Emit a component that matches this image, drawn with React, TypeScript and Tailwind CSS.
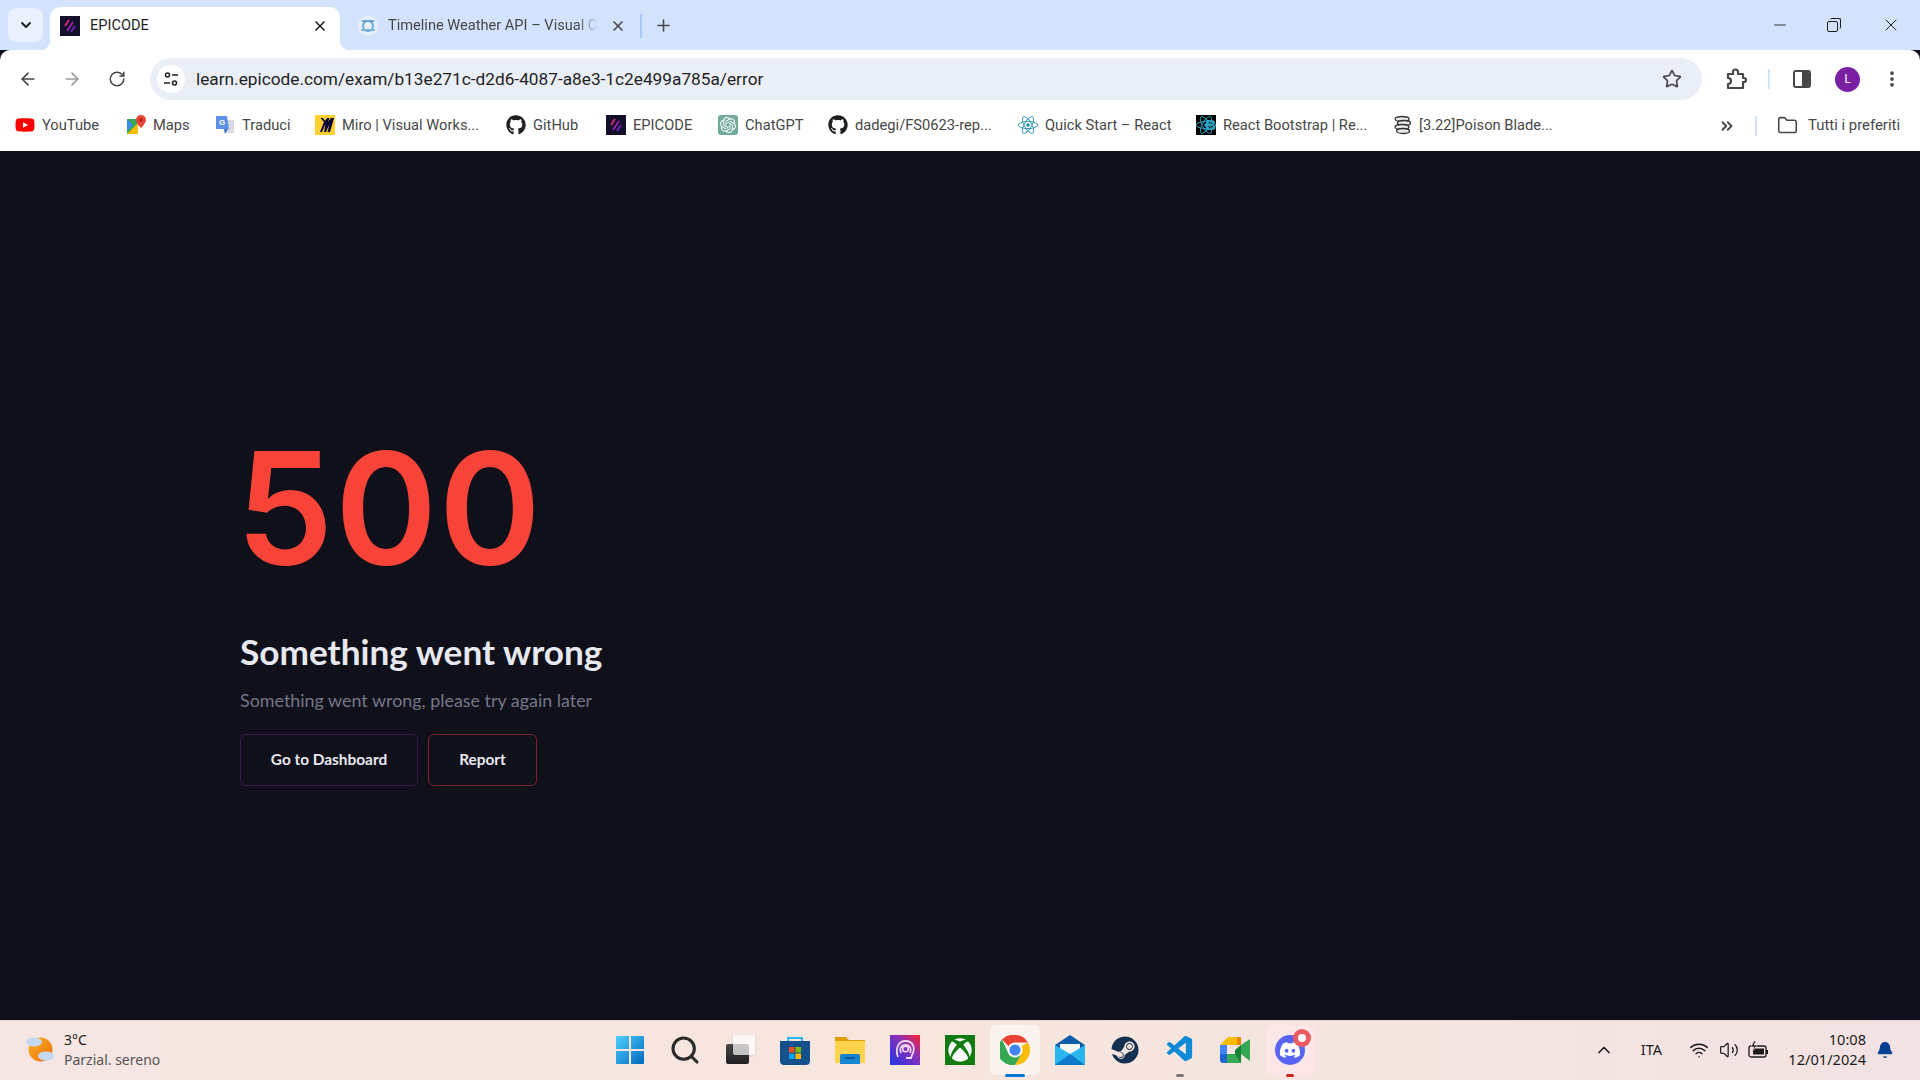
import type { ReactNode } from 'react'
import {
  ArrowLeft,
  ArrowRight,
  Bell,
  ChevronDown,
  ChevronsRight,
  ChevronUp,
  Folder,
  Minus,
  MoreVertical,
  Plus,
  RotateCw,
  Search,
  Star,
  Volume2,
  Wifi,
  X,
} from 'lucide-react'
import { FaDiscord, FaGithub, FaReact, FaSteam, FaXbox, FaYoutube } from 'react-icons/fa'
import { SiOpenai } from 'react-icons/si'
import { VscVscode } from 'react-icons/vsc'

function EpicodeLogo() {
  return (
    <svg viewBox="0 0 20 20" className="h-5 w-5 shrink-0">
      <rect width="20" height="20" fill="#14102a" />
      <path d="M9 4 5 10" stroke="#d8297f" strokeWidth="1.8" />
      <path d="M13 6 7 15" stroke="#a020b0" strokeWidth="1.8" />
      <path d="M15 10 11 16" stroke="#6a24c0" strokeWidth="1.8" />
    </svg>
  )
}

function WeatherApiIcon() {
  return (
    <svg viewBox="0 0 20 20" className="h-5 w-5 shrink-0">
      <circle cx="10" cy="10" r="10" fill="#e8eef8" />
      <circle cx="10" cy="10" r="5" fill="none" stroke="#5aa4d8" strokeWidth="1.8" />
      <path d="M3 14h14" stroke="#7fb5dd" strokeWidth="2" />
      <path d="M4 5h4M12 5h4" stroke="#4a8fc8" strokeWidth="1.6" />
    </svg>
  )
}

function MapsIcon() {
  return (
    <svg viewBox="0 0 20 20" className="h-5 w-5 shrink-0">
      <path d="M1 4h11v15H1z" fill="#34a853" />
      <path d="M1 19 12 8v11z" fill="#fbbc04" />
      <path d="M1 4l6 6-6 6z" fill="#4285f4" />
      <path d="M15 0a5 5 0 0 1 5 5c0 3-5 8-5 8s-5-5-5-8a5 5 0 0 1 5-5z" fill="#ea4335" />
      <circle cx="15" cy="5" r="1.8" fill="#a52714" />
    </svg>
  )
}

function TranslateIcon() {
  return (
    <svg viewBox="0 0 20 20" className="h-5 w-5 shrink-0">
      <path d="M6 5h13v13H9z" fill="#d6dbe2" />
      <path d="M1 1h11l2 13H1z" fill="#5c8fe8" />
      <text x="4" y="10" fontSize="8" fontWeight="700" fill="#fff" fontFamily="'Liberation Sans', sans-serif">
        G
      </text>
      <path d="M9 14l1 5 3-5z" fill="#4474c8" />
    </svg>
  )
}

function MiroIcon() {
  return (
    <svg viewBox="0 0 20 20" className="h-5 w-5 shrink-0">
      <rect width="20" height="20" fill="#ffd02f" />
      <path d="M12 3h2.6l-1.8 4 3.2-4H19l-4 14h-2.5l2-8-3.500 8H9l1.500-8L7 17H5l4-10-3.500-4H8l2 3z" fill="#050038" />
    </svg>
  )
}

function BootstrapIcon() {
  return (
    <div className="relative flex h-5 w-5 shrink-0 items-center justify-center bg-black">
      <FaReact className="h-5 w-5 text-[#2ba9c9]" />
      <span className="absolute right-0 top-[1px] font-['Liberation_Sans',sans-serif] text-[15px] font-bold leading-[18px] text-[#2ba9c9]">
        B
      </span>
    </div>
  )
}

function CoinsIcon() {
  return (
    <svg viewBox="0 0 20 20" className="h-5 w-5 shrink-0" fill="#e8e8e8" stroke="#333" strokeWidth="1.3">
      <ellipse cx="10" cy="4" rx="7" ry="2.500" />
      <ellipse cx="12" cy="8" rx="6.500" ry="2.500" />
      <ellipse cx="10" cy="12" rx="7" ry="2.500" />
      <ellipse cx="11" cy="16" rx="6.500" ry="2.500" />
    </svg>
  )
}

const bookmarks: { label: string; icon: ReactNode; width: string }[] = [
  { label: 'YouTube', icon: <FaYoutube className="h-5 w-5 shrink-0 text-[#f00]" />, width: 'w-[111px]' },
  { label: 'Maps', icon: <MapsIcon />, width: 'w-[89px]' },
  { label: 'Traduci', icon: <TranslateIcon />, width: 'w-[100px]' },
  { label: 'Miro | Visual Works...', icon: <MiroIcon />, width: 'w-[191px]' },
  { label: 'GitHub', icon: <FaGithub className="h-5 w-5 shrink-0 text-[#1f1f1f]" />, width: 'w-[100px]' },
  { label: 'EPICODE', icon: <EpicodeLogo />, width: 'w-[112px]' },
  {
    label: 'ChatGPT',
    icon: (
      <span className="flex h-5 w-5 shrink-0 items-center justify-center rounded-[3px] bg-[#74aa9c]">
        <SiOpenai className="h-4 w-4 text-white" />
      </span>
    ),
    width: 'w-[110px]',
  },
  { label: 'dadegi/FS0623-rep...', icon: <FaGithub className="h-5 w-5 shrink-0 text-[#1f1f1f]" />, width: 'w-[190px]' },
  { label: 'Quick Start – React', icon: <FaReact className="h-5 w-5 shrink-0 text-[#2a8fb5]" />, width: 'w-[178px]' },
  { label: 'React Bootstrap | Re...', icon: <BootstrapIcon />, width: 'w-[196px]' },
  { label: '[3.22]Poison Blade...', icon: <CoinsIcon />, width: 'w-[180px]' },
]

function WindowsIcon() {
  return (
    <svg viewBox="0 0 30 30" className="h-[30px] w-[30px]">
      <defs>
        <linearGradient id="win" x1="0" y1="0" x2="1" y2="1">
          <stop offset="0" stopColor="#4fd0ff" />
          <stop offset="1" stopColor="#0067c0" />
        </linearGradient>
      </defs>
      <path d="M1 2a1 1 0 0 1 1-1h12v13H1zM16 1h12a1 1 0 0 1 1 1v12H16zM1 16h13v13H2a1 1 0 0 1-1-1zM16 16h13v12a1 1 0 0 1-1 1H16z" fill="url(#win)" />
    </svg>
  )
}

function TaskViewIcon() {
  return (
    <div className="relative h-[30px] w-[30px]">
      <div className="absolute bottom-[1px] left-[1px] h-[20px] w-[23px] rounded-[2px] bg-gradient-to-b from-[#4a4a4a] to-[#202020]" />
      <div className="absolute right-[0px] top-[0px] h-[20px] w-[22px] rounded-[2px] bg-white/70 shadow-sm" />
    </div>
  )
}

function StoreIcon() {
  return (
    <svg viewBox="0 0 30 30" className="h-[30px] w-[30px]">
      <path d="M8 7V3h14v4" fill="none" stroke="#28b8f0" strokeWidth="2" />
      <path d="M0 6h30v20a4 4 0 0 1-4 4H4a4 4 0 0 1-4-4z" fill="#14508c" />
      <rect x="9" y="12" width="5.500" height="5.500" fill="#f25022" />
      <rect x="15.500" y="12" width="5.500" height="5.500" fill="#7fba00" />
      <rect x="9" y="18.500" width="5.500" height="5.500" fill="#00a4ef" />
      <rect x="15.500" y="18.500" width="5.500" height="5.500" fill="#ffb900" />
    </svg>
  )
}

function FolderIcon() {
  return (
    <svg viewBox="0 0 30 30" className="h-[30px] w-[30px]">
      <path d="M0 2h11l3 3h16v4H0z" fill="#e0a100" />
      <path d="M0 6h30v22H0z" fill="#ffd24d" />
      <path d="M5 21a2 2 0 0 1 2-2h16a2 2 0 0 1 2 2v8H5z" fill="#1684d0" />
      <path d="M10 23h10" stroke="#0b4f88" strokeWidth="1.500" />
    </svg>
  )
}

function PodcastIcon() {
  return (
    <svg viewBox="0 0 30 30" className="h-[30px] w-[30px]">
      <defs>
        <linearGradient id="pod" x1="0" y1="1" x2="1" y2="0">
          <stop offset="0" stopColor="#2037e8" />
          <stop offset="0.600" stopColor="#8a2fb8" />
          <stop offset="1" stopColor="#ff2030" />
        </linearGradient>
      </defs>
      <rect width="30" height="30" fill="url(#pod)" />
      <path d="M8 22c-3-8 0-16 7.500-16S26 13 22 20l-1 3h-5" fill="none" stroke="#f0d8f0" strokeWidth="1.800" />
      <path d="M11 18c-2-4 0-8 4.500-8s6.500 4 4.500 8" fill="none" stroke="#f0d8f0" strokeWidth="1.800" />
      <circle cx="15.500" cy="14" r="2.800" fill="none" stroke="#f0d8f0" strokeWidth="1.600" />
    </svg>
  )
}

function ChromeIcon() {
  return (
    <svg viewBox="0 0 30 30" className="h-[30px] w-[30px]">
      <path d="M15 0a15 15 0 0 1 13 7.500H15a7.500 7.500 0 0 0-6.500 3.750L2 4.500A15 15 0 0 1 15 0z" fill="#ea4335" />
      <path d="M28 7.500A15 15 0 0 1 15 30l6.500-11.250A7.500 7.500 0 0 0 21.500 11z" fill="#fbbc04" />
      <path d="M15 30A15 15 0 0 1 2 4.500l6.500 14.250A7.500 7.500 0 0 0 21.500 18.750z" fill="#34a853" />
      <circle cx="15" cy="15" r="6.800" fill="#fff" />
      <circle cx="15" cy="15" r="5.600" fill="#4285f4" />
    </svg>
  )
}

function MailIcon() {
  return (
    <svg viewBox="0 0 30 30" className="h-[30px] w-[30px]">
      <path d="M0 10 15 0l15 10v18H0z" fill="#0f5da8" />
      <path d="M5 9h20v8l-10 5-10-5z" fill="#f4f6f8" />
      <path d="M0 10l15 9 15-9v20H0z" fill="#29b6ee" />
      <path d="M0 30l15-11 15 11z" fill="#0f78c8" />
    </svg>
  )
}

function MeetIcon() {
  return (
    <svg viewBox="0 0 30 30" className="h-[30px] w-[30px]">
      <path d="M8 2h13v8H0z" fill="#fbbc04" />
      <path d="M0 10h7v9H0z" fill="#4285f4" />
      <path d="M0 19h7v9H3a3 3 0 0 1-3-3z" fill="#1967d2" />
      <path d="M7 19h14v9H7z" fill="#34a853" />
      <path d="M21 10v-8l-4 0v8z" fill="#ea8600" />
      <path d="M15 15l6-5v18l-6-9z" fill="#188038" />
      <path d="M21 10l9-6v22l-9-7z" fill="#34a853" />
    </svg>
  )
}

function WeatherIcon() {
  return (
    <svg viewBox="0 0 30 30" className="h-[30px] w-[30px]">
      <defs>
        <linearGradient id="sun" x1="0" y1="0" x2="1" y2="1">
          <stop offset="0" stopColor="#f9b51e" />
          <stop offset="1" stopColor="#ee6a10" />
        </linearGradient>
      </defs>
      <circle cx="15.500" cy="14.500" r="12" fill="url(#sun)" />
      <ellipse cx="9" cy="7" rx="8" ry="4.500" fill="#c3d9f2" />
      <ellipse cx="21" cy="21" rx="8" ry="4.500" fill="#c3d9f2" />
    </svg>
  )
}

function ExtensionsIcon() {
  return (
    <svg viewBox="0 0 24 24" className="ml-[22px] h-[24px] w-[24px]" fill="none" stroke="#474747" strokeWidth="2.200" strokeLinejoin="round">
      <path d="M4 7h5V5a2.500 2.500 0 0 1 5 0v2h5v4h1a2 2 0 0 1 0 4h-1v6H4v-4a2.500 2.500 0 0 0 0-6z" />
    </svg>
  )
}

function BatteryIcon() {
  return (
    <svg viewBox="0 0 22 18" className="ml-[9px] h-[18px] w-[22px]" fill="none" stroke="#1c1c1c" strokeWidth="1.300">
      <rect x="1" y="5" width="17" height="11" rx="2" />
      <rect x="5" y="7.500" width="11" height="6" fill="#1c1c1c" stroke="none" />
      <path d="M19 9v4" strokeWidth="2" />
      <path d="M6 0 3 6h3l-2 5 5-7H6l2-4z" fill="#1c1c1c" stroke="#f3e2e3" strokeWidth="0.600" />
    </svg>
  )
}

function TaskbarSlot({
  children,
  highlight,
  indicator,
}: {
  children: ReactNode
  highlight?: string
  indicator?: string
}) {
  return (
    <div className="relative flex h-[57px] w-[55px] items-center justify-center">
      {highlight && <div className={`absolute inset-x-[2.5px] top-[4px] h-[50px] rounded-[5px] ${highlight}`} />}
      <div className="relative">{children}</div>
      {indicator && <div className={`absolute bottom-[1px] left-1/2 h-[3px] -translate-x-1/2 rounded-full ${indicator}`} />}
    </div>
  )
}

export default function App() {
  return (
    <div className="flex h-[1080px] w-[1920px] flex-col overflow-hidden bg-[#0f101a] font-['Noto_Sans',sans-serif]">
      {/* tab strip */}
      <div className="flex h-[50px] shrink-0 items-end bg-[#d3e3fd] pl-2">
        <div className="mb-2 flex h-[34px] w-[35px] items-center justify-center rounded-lg bg-[#eaf1fd]">
          <ChevronDown size={16} strokeWidth={3} className="text-[#1f1f1f]" />
        </div>
        <div className="relative ml-[7px] flex h-[43px] w-[290px] items-center rounded-t-[10px] bg-white pb-[6px] pl-[10px] pr-[12px]">
          <div className="absolute -left-[10px] bottom-0 h-[10px] w-[10px] bg-[radial-gradient(circle_at_0_0,#d3e3fd_10px,#fff_10.500px)]" />
          <div className="absolute -right-[10px] bottom-0 h-[10px] w-[10px] bg-[radial-gradient(circle_at_100%_0,#d3e3fd_10px,#fff_10.500px)]" />
          <EpicodeLogo />
          <span className="ml-[10px] flex-1 font-['Roboto',sans-serif] text-[14.6px] text-[#1f1f1f]">EPICODE</span>
          <X size={16} strokeWidth={2.5} className="text-[#1f1f1f]" />
        </div>
        <div className="flex h-[43px] items-center pb-[6px] pl-[18px]">
          <WeatherApiIcon />
          <span className="ml-[10px] w-[210px] whitespace-nowrap font-['Roboto',sans-serif] text-[14.6px] text-[#474747] [mask-image:linear-gradient(90deg,#000_90%,transparent)]">
            Timeline Weather API – Visual C
          </span>
          <X size={16} strokeWidth={2.5} className="ml-[12px] text-[#474747]" />
          <div className="ml-[14px] h-[24px] w-[2px] bg-[#a8c7fa]" />
          <Plus size={19} strokeWidth={2} className="ml-[12px] text-[#474747]" />
        </div>
        <div className="mb-[15px] ml-auto flex items-center text-[#1f1f1f]">
          <Minus size={18} strokeWidth={1.2} />
          <div className="relative ml-[38px] h-[14px] w-[14px]">
            <div className="absolute bottom-0 left-0 h-[11px] w-[11px] rounded-[2px] border border-[#1f1f1f]" />
            <div className="absolute right-0 top-0 h-[11px] w-[11px] rounded-[2px] border-r border-t border-[#1f1f1f]" />
          </div>
          <X size={20} strokeWidth={1.2} className="ml-[40px] mr-[19px]" />
        </div>
      </div>

      {/* toolbar */}
      <div className="flex h-[50px] shrink-0 items-center rounded-t-[10px] bg-white pt-[8px]">
        <ArrowLeft size={20} strokeWidth={2} className="ml-[18px] text-[#474747]" />
        <ArrowRight size={20} strokeWidth={2} className="ml-[24px] text-[#9a9a9a]" />
        <RotateCw size={18} strokeWidth={2} className="ml-[26px] text-[#474747]" />
        <div className="ml-[24px] flex h-[42px] w-[1552px] items-center rounded-full bg-[#eaeef7] pl-[7px] pr-[20px]">
          <div className="flex h-[28px] w-[28px] items-center justify-center rounded-full bg-white">
            <svg viewBox="0 0 16 16" className="h-4 w-4" fill="none" stroke="#1f1f1f" strokeWidth="1.500">
              <circle cx="4.500" cy="4" r="2" />
              <path d="M9 4h6M1 12h6" />
              <circle cx="11.500" cy="12" r="2" />
            </svg>
          </div>
          <span className="ml-[11px] flex-1 pt-[2px] font-['Roboto',sans-serif] text-[17.26px] text-[#1f1f1f]">
            learn.epicode.com/exam/b13e271c-d2d6-4087-a8e3-1c2e499a785a/error
          </span>
          <Star size={20} strokeWidth={2} className="text-[#474747]" />
        </div>
        <ExtensionsIcon />
        <div className="ml-[20px] h-[20px] w-[2px] bg-[#d3e3fd]" />
        <div className="ml-[23px] flex h-[18px] w-[18px] overflow-hidden rounded-[3px] border-2 border-[#474747]">
          <div className="w-1/2 bg-white" />
          <div className="w-1/2 bg-[#474747]" />
        </div>
        <div className="ml-[24px] flex h-[25px] w-[25px] items-center justify-center rounded-full bg-[#7b1fa2] text-[12px] text-white">
          L
        </div>
        <MoreVertical size={20} strokeWidth={2.500} className="ml-[22px] text-[#474747]" />
      </div>

      {/* bookmarks bar */}
      <div className="flex h-[51px] shrink-0 items-center bg-white pl-[15px] font-['Roboto',sans-serif] text-[14.7px] text-[#474747]">
        {bookmarks.map((b) => (
          <div key={b.label + b.width} className={`flex shrink-0 items-center gap-[7px] whitespace-nowrap ${b.width}`}>
            {b.icon}
            <span>{b.label}</span>
          </div>
        ))}
        <ChevronsRight size={18} strokeWidth={2.500} className="ml-[146px] text-[#474747]" />
        <div className="ml-[19px] h-[20px] w-[2px] bg-[#d3e3fd]" />
        <Folder size={21} strokeWidth={1.800} className="ml-[20px] text-[#474747]" />
        <span className="ml-[10px] whitespace-nowrap text-[14.9px]">Tutti i preferiti</span>
      </div>

      {/* page */}
      <main className="flex h-[869px] shrink-0 flex-col items-start pl-[240px] pt-[277px] font-['Lato',sans-serif]">
        <h1 className="-ml-[4px] h-[160px] font-['Inter',sans-serif] text-[155px] font-semibold leading-[160px] tracking-[1.5px] text-[#f84339]">
          500
        </h1>
        <h2 className="mt-[41px] h-[45px] text-[35.2px] font-bold leading-[45px] text-[#e8e9f0]">Something went wrong</h2>
        <p className="mt-[12px] h-[28px] text-[17.9px] leading-[28px] text-[#757689]">Something went wrong, please try again later</p>
        <div className="mt-[20px] flex gap-[10px]">
          <button className="flex h-[52px] w-[178px] items-center justify-center rounded-[6px] border border-[#3f1650] text-[15.4px] font-bold text-[#e8e9f0]">
            Go to Dashboard
          </button>
          <button className="flex h-[52px] w-[109px] items-center justify-center rounded-[6px] border border-[#7a2329] text-[15.4px] font-bold text-[#e8e9f0]">
            Report
          </button>
        </div>
      </main>

      {/* taskbar */}
      <div className="grid h-[60px] shrink-0 grid-cols-[1fr_auto_1fr] items-center border-t border-[#eadad6] bg-gradient-to-r from-[#f6e6e3] via-[#f6e6dd] to-[#f3e2e3] pb-[2px]">
        <div className="flex items-center pl-[25px]">
          <WeatherIcon />
          <div className="ml-[9px] text-[14px] leading-[20px]">
            <div className="text-[#1c1c1c]">3°C</div>
            <div className="text-[#555]">Parzial. sereno</div>
          </div>
        </div>
        <div className="flex items-center">
          <TaskbarSlot>
            <WindowsIcon />
          </TaskbarSlot>
          <TaskbarSlot>
            <Search size={32} strokeWidth={2.300} className="text-[#2a2a2a]" />
          </TaskbarSlot>
          <TaskbarSlot>
            <TaskViewIcon />
          </TaskbarSlot>
          <TaskbarSlot>
            <StoreIcon />
          </TaskbarSlot>
          <TaskbarSlot>
            <FolderIcon />
          </TaskbarSlot>
          <TaskbarSlot>
            <PodcastIcon />
          </TaskbarSlot>
          <TaskbarSlot>
            <div className="flex h-[30px] w-[30px] items-center justify-center bg-[#107c10]">
              <FaXbox size={24} className="text-white" />
            </div>
          </TaskbarSlot>
          <TaskbarSlot highlight="bg-white/50" indicator="w-[20px] bg-[#0078d4]">
            <ChromeIcon />
          </TaskbarSlot>
          <TaskbarSlot>
            <MailIcon />
          </TaskbarSlot>
          <TaskbarSlot>
            <FaSteam size={28} className="rounded-full text-[#12304f]" />
          </TaskbarSlot>
          <TaskbarSlot indicator="w-[8px] bg-[#7a7a7a]">
            <VscVscode size={31} className="text-[#0f8ad6]" />
          </TaskbarSlot>
          <TaskbarSlot>
            <MeetIcon />
          </TaskbarSlot>
          <TaskbarSlot highlight="bg-[#fde6e8]" indicator="w-[8px] bg-[#c42b1c]">
            <div className="flex h-[30px] w-[30px] items-center justify-center rounded-full bg-[#5865f2]">
              <FaDiscord size={22} className="text-white" />
            </div>
            <div className="absolute -right-[6px] -top-[6px] flex h-[18px] w-[18px] items-center justify-center rounded-full bg-[#ee5a62]">
              <div className="h-[8px] w-[8px] rounded-full bg-white" />
            </div>
          </TaskbarSlot>
        </div>
        <div className="flex items-center justify-end text-[#1c1c1c]">
          <ChevronUp size={20} strokeWidth={2} />
          <span className="ml-[27px] text-[14.5px]">ITA</span>
          <Wifi size={20} strokeWidth={1.800} className="ml-[27px]" />
          <Volume2 size={20} strokeWidth={1.500} className="ml-[10px]" />
          <BatteryIcon />
          <div className="ml-[16px] w-[80px] text-right text-[14.6px] leading-[20px]">
            <div className="-mt-[1px]">10:08</div>
            <div className="whitespace-nowrap">12/01/2024</div>
          </div>
          <Bell size={18} fill="#003e92" strokeWidth={1.500} className="ml-[10px] mr-[26px] text-[#003e92]" />
        </div>
      </div>
    </div>
  )
}
